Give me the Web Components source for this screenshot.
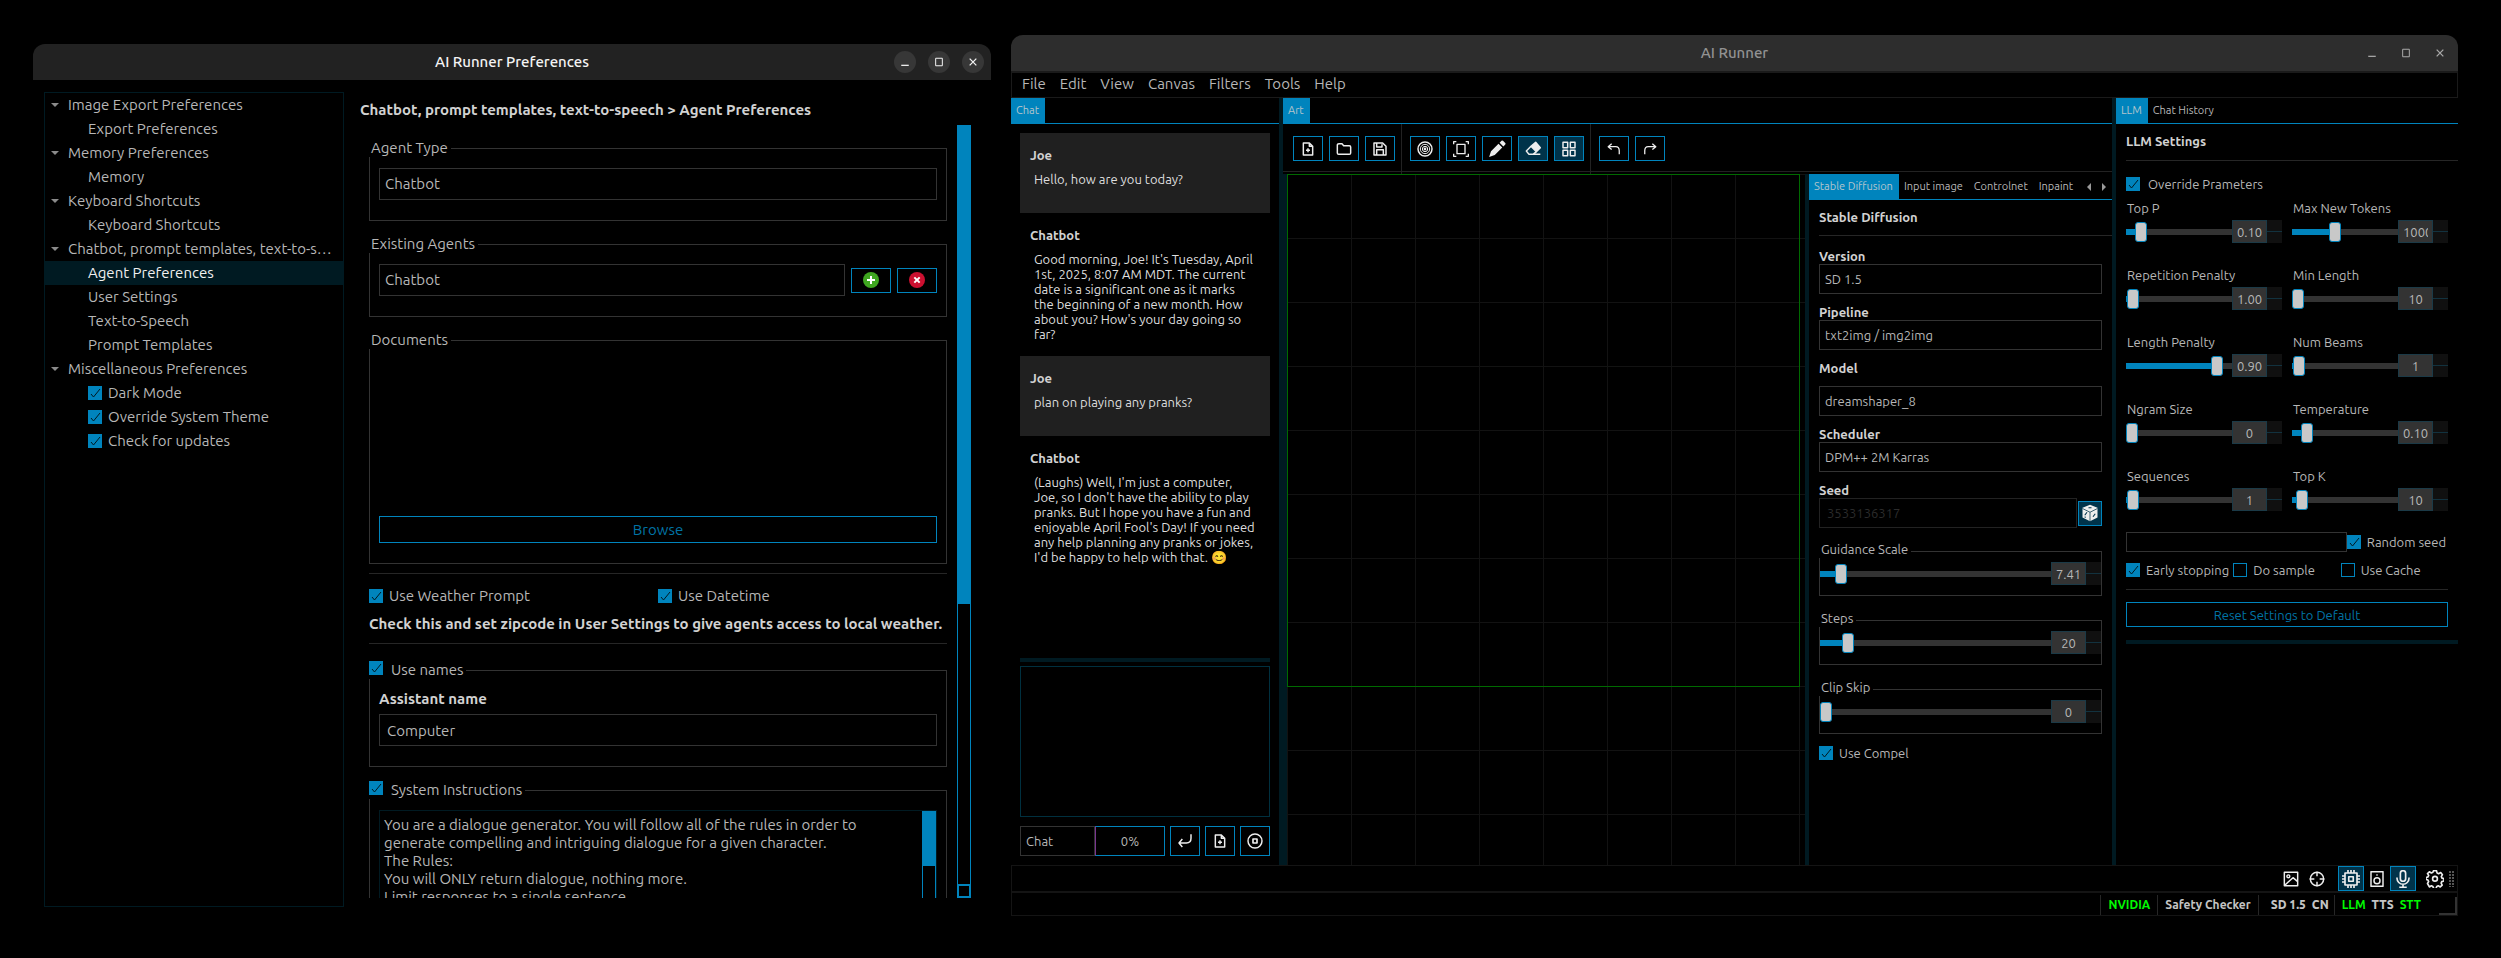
<!DOCTYPE html>
<html lang="en">
<head>
<meta charset="utf-8">
<title>AI Runner</title>
<style>
  :root {
    --blue: #0084bd;
    --deep: #001a22;
    --line: #333;
    --faint: #1c1c1c;
    --text: #b7b7b7;
    --bright: #d2d2d2;
  }
  html, body { margin: 0; height: 100%; background: #000; }
  body {
    color: var(--text);
    font-family: Ubuntu, "Noto Sans", "Open Sans", sans-serif;
    font-size: 15px;
    line-height: 18px;
  }
</style>
</head>
<body>
<app-desktop></app-desktop>
<script>
const BASE = `
  *, *::before, *::after { box-sizing: border-box; }
  button, input, select, textarea {
    appearance: none; margin: 0; padding: 0; border: 0; border-radius: 0; outline: 0;
    background: none; color: inherit; font: inherit;
  }
  a { color: inherit; text-decoration: none; }
  ul { list-style: none; margin: 0; padding: 0; }
  h1, h2, p { margin: 0; }
  hr { width: 100%; height: 1px; margin: 0; border: 0; background: #262626; flex: none; }
  svg { display: block; }
  input[type=checkbox] { width: 14px; height: 14px; border: 1px solid var(--blue); flex: none; }
  input[type=checkbox]:checked {
    background: var(--blue) url("data:image/svg+xml,%3Csvg xmlns='http://www.w3.org/2000/svg' viewBox='0 0 12 12'%3E%3Cpath d='M2 7l2.5 3L11 2' fill='none' stroke='%23001a22' stroke-width='1'/%3E%3C/svg%3E");
  }
`;

const ICONS = {
  newfile: '<path d="M5 3h9l5 5v13H5z M14 3v5h5 M12 11v6 M9 14h6"/>',
  folder: '<path d="M2 6.5Q2 4 4.5 4H9l2.500 3H20q2 0 2 2v9q0 2-2 2H4q-2 0-2-2z"/>',
  save: '<path d="M3 3h13l5 5v13H3z M7 21v-8h10v8 M7 3v6h8V5"/>',
  target: '<circle cx="12" cy="12" r="10.500"/><circle cx="12" cy="12" r="7" stroke-width="1.500"/><circle cx="12" cy="12" r="4" stroke-width="1.500"/><circle cx="12" cy="12" r="1"/>',
  bounds: '<path d="M6 5h12v14H6z M1 5V1h4 M19 1h4v4 M23 19v4h-4 M5 23H1v-4" stroke-width="2"/>',
  pencil: '<path d="M1.500 22.500L4 15 14 5l5 5L9 20z M15.500 3.500L18 1q1-1 2 0l3 3q1 1 0 2l-2.500 2.500z" fill="currentColor" stroke="none"/>',
  eraser: '<path d="M9 8l7-6 7 8-6 6z" fill="currentColor"/><path d="M9 8l-7 7 4 5h6l5-4M6 20h17" fill="none"/>',
  grid: '<path d="M3 2h7v8H3z M14 2h7v8h-7z M3 14h7v8H3z M14 14h7v8h-7z"/>',
  undo: '<path d="M8 3L2 8l6 5 M3 8h12q6 0 6 7v6"/>',
  redo: '<path d="M16 3l6 5-6 5 M21 8H9q-6 0-6 7v6"/>',
  enter: '<path d="M8 9l-5 6 5 6 M3 15h11q7 0 7-7V2"/>',
  stop: '<circle cx="12" cy="12" r="10.500"/><path d="M9 9h6v6H9z" stroke-width="2.500"/>',
  image: '<path d="M2 2h20v20H2z M3 21L15 10l7 6" /><circle cx="8" cy="8" r="2.200"/>',
  cross: '<circle cx="12" cy="12" r="10"/><path d="M12 1v7 M12 16v7 M1 12h7 M16 12h7"/>',
  chip: '<path d="M4 4h16v16H4z M9 9h6v6H9z M8 0v4 M12 0v4 M16 0v4 M8 20v4 M12 20v4 M16 20v4 M0 8h4 M0 12h4 M0 16h4 M20 8h4 M20 12h4 M20 16h4"/>',
  speaker: '<path d="M3 1h18v22H3z M11 6h2"/><circle cx="12" cy="14.500" r="4.500"/>',
  mic: '<rect x="8.500" y="1" width="7" height="14" rx="3.500"/><path d="M4 10v1a8 8 0 0 0 16 0v-1 M12 19v4 M7 23h10"/>',
  gear: '<path d="M10 1h4l.8 3 2 .9L19.600 3.400l2.300 2.800-1.500 2.600.9 2 2.700.8v3l-3 .9-.8 2 1.400 2.600-2.600 2.500-2.700-1.500-2 .8-.8 3h-3.500l-.8-3-2-.8-2.700 1.500L2 18l1.500-2.600-.9-2L0 12.500V10l2.700-.8.9-2L2 4.800 4.500 2.400l2.700 1.500 2-.9z" /><circle cx="12" cy="11.700" r="3.200"/>',
  dice: '<path d="M12 1l10 4v13l-10 5-10-5V5z" fill="currentColor" stroke="none"/><path d="M2 6l10 5 10-5 M12 11v12" stroke="#00334a" stroke-width="1"/><path d="M10 5h4 M5 15l3-4 M5 18l1-1 M16 17l3-4" stroke="#00334a" stroke-width="1.500"/>',
  add: '<circle cx="12" cy="12" r="12" fill="#3fa620" stroke="none"/><path d="M12 6v12 M6 12h12" stroke="#fff" stroke-width="3"/>',
  remove: '<circle cx="12" cy="12" r="12" fill="#cc1030" stroke="none"/><path d="M8 8l8 8 M16 8l-8 8" stroke="#fff" stroke-width="3"/>',
  min: '<path d="M3 20h18" stroke-width="3"/>',
  max: '<path d="M4 3h16v18H4z" stroke-width="2.400"/>',
  close: '<path d="M4 4l16 16 M20 4L4 20" stroke-width="3"/>'
};
const icon = (name, size = 16) =>
  `<svg width="${size}" height="${size}" viewBox="0 0 24 24" fill="none" stroke="currentColor" stroke-width="2.200" stroke-linejoin="round" aria-hidden="true">${ICONS[name]}</svg>`;

function define(name, render) {
  customElements.define(name, class extends HTMLElement {
    constructor() { super(); this.attachShadow({ mode: 'open' }); }
    connectedCallback() {
      if (this.shadowRoot.firstChild) return;
      const template = document.createElement('template');
      const attr = (key, fallback = '') => this.getAttribute(key) ?? fallback;
      const [css, html] = render(attr, this);
      template.innerHTML = `<style>${BASE}${css}</style>${html}`;
      this.shadowRoot.append(template.content.cloneNode(true));
    }
  });
}

/* Framed window: title bar, then the slotted content. */
define('ui-window', attr => [`
  :host { display: flex; flex-direction: column; min-width: 0; min-height: 0; --chip: none; }
  :host([active]) { --chip: #373737; }
  header {
    display: grid; grid-template-columns: 1fr auto 1fr; align-items: center; flex: none;
    height: 36px; padding: 0 7px; border-radius: 12px 12px 0 0; background: #2d2d2d; color: #929292;
  }
  :host([active]) header { background: #222; color: #f4f4f4; }
  h1 { grid-column: 2; font-size: 15px; font-weight: 500; line-height: 18px; }
  div { display: flex; justify-content: flex-end; gap: 12px; }
  button { display: grid; place-items: center; width: 22px; height: 22px; border-radius: 11px; background: var(--chip); color: #aaa; }
  :host([active]) button { color: #f4f4f4; }
`, `<header><h1>${attr('heading')}</h1><div>
  <button aria-label="Minimize">${icon('min', 10)}</button>
  <button aria-label="Maximize">${icon('max', 10)}</button>
  <button aria-label="Close">${icon('close', 10)}</button></div></header><slot></slot>`]);

define('check-box', attr => [`
  :host { display: block; }
  label { display: flex; align-items: center; gap: var(--gap, 6px); white-space: nowrap; }
`, `<label><input type="checkbox" ${attr('off', null) === null ? 'checked' : ''}><span>${attr('label')}</span></label>`]);

/* Titled frame; the title may carry a tick box. */
define('group-box', attr => {
  const ticked = attr('checkable', null) !== null;
  return [`
  :host { display: block; }
  fieldset { min-width: 0; margin: 0; padding: 11px 9px 20px; border: 1px solid var(--line); }
  legend { margin-left: -10px; padding: 0 3px 0 2px; background: #000; line-height: 18px; }
  legend.ticked { padding-left: 0; }
  label { display: flex; gap: 8px; }
  :host([compact]) fieldset { padding: 4px 0 10px; }
  :host([compact]) legend { margin-left: -1px; padding: 0 3px 4px 2px; line-height: 10px; }
`, `<fieldset><legend class="${ticked ? 'ticked' : ''}">${ticked
    ? `<label><input type="checkbox" checked>${attr('label')}</label>` : attr('label')}</legend><slot></slot></fieldset>`];
});

define('combo-box', attr => [`
  :host { display: block; min-width: 0; }
  label { display: block; color: var(--bright); font-weight: 700; line-height: 16px; }
  :host([spaced]) label { margin-bottom: 10px; }
  select { display: block; width: 100%; height: var(--field, 32px); padding: 0 5px; border: 1px solid var(--line); }
`, `${attr('label') ? `<label for="s">${attr('label')}</label>` : ''}
  <select id="s" aria-label="${attr('label', attr('name'))}"><option>${attr('value')}</option></select>`]);

define('icon-button', attr => [`
  :host { display: block; flex: none; width: 30px; height: 25px; }
  button { display: grid; place-items: center; width: 100%; height: 100%; border: 1px solid var(--blue); color: #eee; }
  :host([on]) button { background: #00334a; }
  :host([plain]) button { border-color: transparent; }
`, `<button aria-label="${attr('label')}">${icon(attr('icon'), attr('size', 16))}</button>`]);

define('tab-strip', attr => {
  const tabs = attr('tabs').split('|').map((t, i) => `<button role="tab" aria-selected="${i === 0}">${t}</button>`).join('');
  const more = attr('more', null) === null ? '' : `<nav><button aria-label="Previous tabs">
    <svg width="4" height="8"><path d="M4 0v8L0 4z" fill="#999"/></svg></button><button aria-label="Next tabs">
    <svg width="4" height="8"><path d="M0 0v8l4-4z" fill="#999"/></svg></button></nav>`;
  return [`
  :host { display: flex; flex: none; height: 26px; border-bottom: 1px solid var(--blue); font-size: 11px; line-height: 13px; }
  div { display: flex; }
  button { padding: 0 6px 1px 5px; white-space: nowrap; }
  button[aria-selected=true] { background: var(--blue); color: #b4c4cc; }
  nav { display: flex; gap: 11px; margin-left: auto; padding-right: 6px; }
  nav button { padding: 0; }
`, `<div role="tablist">${tabs}</div>${more}`];
});

/* Slider with its number field and stepper. */
define('slider-spin', attr => [`
  :host { display: block; min-width: 0; }
  label { display: block; height: 20px; padding: 0 1px; line-height: 16px; }
  div { display: flex; align-items: center; height: 23px; }
  input[type=range] { flex: 1; min-width: 0; width: 0; height: 20px; }
  input[type=range]::-webkit-slider-runnable-track {
    height: 6px;
    background: linear-gradient(90deg, var(--blue) ${attr('pos')}%, #333 ${attr('pos')}%);
  }
  input[type=range]::-webkit-slider-thumb {
    appearance: none; width: 12px; height: 20px; margin-top: -7px;
    border: 1px solid var(--blue); border-radius: 3px; background: #c8c8c8;
  }
  .num { width: 35px; height: 23px; padding: 0 4px; border: 1px solid #1b3a47; background: #333; text-align: center; }
  .step { flex: none; display: grid; grid-template-rows: 1fr 1fr; width: 15px; height: 23px; background: #101010; }
  .step button:first-child { border-bottom: 1px solid #12323f; }
`, `${attr('label') ? `<label for="r">${attr('label')}</label>` : ''}
  <div><input type="range" id="r" min="0" max="100" value="${attr('pos')}" aria-label="${attr('label', attr('name'))}">
  <input type="text" class="num" value="${attr('value')}" aria-label="Value">
  <span class="step"><button aria-label="Increase"></button><button aria-label="Decrease"></button></span></div>`]);

define('tree-panel', () => {
  const group = (title, kids) => `<li><button><svg width="8" height="4"><path d="M0 0h8L4 4z" fill="#8a8a8a"/></svg>${title}</button><ul>${kids}</ul></li>`;
  const page = (title, on) => `<li><a href="#" ${on ? 'aria-current="page"' : ''}>${title}</a></li>`;
  const tick = title => `<li><check-box label="${title}"></check-box></li>`;
  return [`
  :host { display: block; flex: none; width: 300px; border: 1px solid var(--deep); line-height: 24px; white-space: nowrap; }
  button, a { display: flex; align-items: center; width: 100%; height: 24px; }
  button { gap: 9px; padding-left: 6px; }
  a { padding-left: 43px; }
  a[aria-current] { background: var(--deep); color: #f0f0f0; }
  check-box { padding-left: 43px; }
`, `<ul>${[
    group('Image Export Preferences', page('Export Preferences')),
    group('Memory Preferences', page('Memory')),
    group('Keyboard Shortcuts', page('Keyboard Shortcuts')),
    group('Chatbot, prompt templates, text-to-s…', page('Agent Preferences', true) + page('User Settings') + page('Text-to-Speech') + page('Prompt Templates')),
    group('Miscellaneous Preferences', tick('Dark Mode') + tick('Override System Theme') + tick('Check for updates'))
  ].join('')}</ul>`];
});

define('preferences-page', () => [`
  :host { display: flex; flex-direction: column; flex: 1; min-width: 0; padding: 9px 9px 9px 16px; }
  h2 { color: var(--bright); font-size: 15px; font-weight: 700; line-height: 18px; flex: none; }
  .view { display: flex; flex: 1; min-height: 0; margin-top: 6px; gap: 10px; }
  .page { flex: 1; min-width: 0; padding: 14px 0 0 9px; overflow: hidden; }
  group-box + group-box { margin-top: 14px; }
  .row { display: flex; align-items: center; gap: 6px; }
  .row combo-box { flex: 1; }
  .row icon-button { width: 40px; }
  .files { min-height: 150px; margin-bottom: 6px; }
  .browse { display: block; width: 100%; height: 27px; border: 1px solid var(--blue); color: #0074a6; }
  hr { margin: 9px 0 13px; }
  .pair { display: grid; grid-template-columns: 1fr 1fr; }
  .note { margin: 10px 0; color: var(--bright); font-weight: 700; white-space: nowrap; }
  hr.low { margin: 0 0 17px; }
  .name { display: block; color: var(--bright); font-weight: 700; }
  .text { display: block; width: 100%; height: 32px; margin-top: 6px; padding: 0 7px; border: 1px solid var(--line); }
  .prompt { display: flex; height: 164px; border: 1px solid var(--deep); }
  textarea { flex: 1; min-width: 0; padding: 5px 4px; line-height: 18px; resize: none; overflow: hidden; white-space: pre; }
  .bar { flex: none; width: 14px; border: 1px solid var(--blue); }
  .bar i { display: block; height: 34%; background: var(--blue); }
  .scroll { display: flex; flex-direction: column; flex: none; width: 14px; border: 1px solid var(--blue); }
  .scroll i { height: 62%; background: var(--blue); }
  .scroll b { height: 14px; margin: auto -1px -1px; border: 2px solid var(--blue); }
`, `<h2>Chatbot, prompt templates, text-to-speech &gt; Agent Preferences</h2>
<div class="view"><div class="page">
  <group-box label="Agent Type"><combo-box name="Agent Type" value="Chatbot"></combo-box></group-box>
  <group-box label="Existing Agents"><div class="row"><combo-box name="Existing Agents" value="Chatbot"></combo-box>
    <icon-button icon="add" label="Add agent"></icon-button><icon-button icon="remove" label="Delete agent"></icon-button></div></group-box>
  <group-box label="Documents"><div class="files"></div><button class="browse">Browse</button></group-box>
  <hr>
  <div class="pair"><check-box label="Use Weather Prompt"></check-box><check-box label="Use Datetime"></check-box></div>
  <p class="note">Check this and set zipcode in User Settings to give agents access to local weather.</p>
  <hr class="low">
  <group-box label="Use names" checkable><label class="name" for="n">Assistant name</label><input class="text" id="n" type="text" value="Computer"></group-box>
  <group-box label="System Instructions" checkable><div class="prompt"><textarea aria-label="System Instructions">You are a dialogue generator. You will follow all of the rules in order to
generate compelling and intriguing dialogue for a given character.
The Rules:
You will ONLY return dialogue, nothing more.
Limit responses to a single sentence.</textarea><span class="bar"><i></i></span></div></group-box>
</div><span class="scroll"><i></i><b></b></span></div>`]);

define('chat-message', attr => [`
  :host { display: block; min-height: 80px; padding: 14px 15px 14px 10px; font-size: 13px; line-height: 15px; }
  :host([user]) { background: #202020; }
  h2 { color: var(--bright); font-size: 13px; font-weight: 700; line-height: 17px; }
  p { margin: 8px 0 0 4px; color: #dedede; white-space: pre-line; }
`, `<h2>${attr('from')}</h2><p><slot></slot></p>`]);

define('chat-pane', () => [`
  :host { display: flex; flex-direction: column; flex: none; width: 268px; font-size: 13px; line-height: 15px; }
  .body { display: flex; flex-direction: column; flex: 1; min-height: 0; padding: 9px; }
  .log { flex: 1; min-height: 0; overflow: hidden; }
  .split { height: 4px; background: var(--deep); flex: none; }
  textarea { flex: none; height: 151px; margin: 4px 0 9px; border: 1px solid #00303f; resize: none; }
  .row { display: flex; gap: 5px; }
  combo-box { --field: 30px; width: 75px; }
  .meter { flex: 1; display: grid; place-items: center; height: 30px; margin-left: -5px; border: 1px solid var(--blue); border-left-color: #7a3590; }
  icon-button { height: 30px; }
`, `<tab-strip tabs="Chat"></tab-strip>
<div class="body"><div class="log">
  <chat-message user from="Joe">Hello, how are you today?</chat-message>
  <chat-message from="Chatbot">Good morning, Joe! It's Tuesday, April
1st, 2025, 8:07 AM MDT. The current
date is a significant one as it marks
the beginning of a new month. How
about you? How's your day going so
far?</chat-message>
  <chat-message user from="Joe">plan on playing any pranks?</chat-message>
  <chat-message from="Chatbot">(Laughs) Well, I'm just a computer,
Joe, so I don't have the ability to play
pranks. But I hope you have a fun and
enjoyable April Fool's Day! If you need
any help planning any pranks or jokes,
I'd be happy to help with that. 😊</chat-message>
</div>
<div class="split"></div>
<textarea aria-label="Message"></textarea>
<div class="row"><combo-box name="Mode" value="Chat"></combo-box><span class="meter" role="progressbar" aria-valuenow="0">0%</span>
  <icon-button icon="enter" label="Send"></icon-button><icon-button icon="newfile" label="New conversation"></icon-button><icon-button icon="stop" label="Stop"></icon-button></div>
</div>`]);

define('diffusion-pane', () => [`
  :host { display: flex; flex-direction: column; flex: none; width: 303px; font-size: 13px; line-height: 16px; }
  .body { padding: 9px 10px 0; --field: 30px; }
  h2 { color: var(--bright); font-size: 13px; font-weight: 700; line-height: 16px; }
  hr { width: auto; margin: 10px -10px 12px 0; }
  combo-box { margin-bottom: 10px; }
  label { display: block; color: var(--bright); font-weight: 700; }
  .seed { display: flex; align-items: center; gap: 1px; margin-bottom: 16px; }
  .seed input { flex: 1; min-width: 0; height: 30px; padding: 0 7px; border: 1px solid #222; color: #2c2c2c; }
  .seed icon-button { width: 24px; }
  group-box { margin-bottom: 17px; }
  check-box { margin-top: -6px; }
`, `<tab-strip tabs="Stable Diffusion|Input image|Controlnet|Inpaint" more></tab-strip>
<div class="body"><h2>Stable Diffusion</h2><hr>
  <combo-box label="Version" value="SD 1.5"></combo-box>
  <combo-box label="Pipeline" value="txt2img / img2img"></combo-box>
  <combo-box label="Model" value="dreamshaper_8" spaced></combo-box>
  <combo-box label="Scheduler" value="DPM++ 2M Karras"></combo-box>
  <label for="seed">Seed</label>
  <div class="seed"><input type="text" id="seed" value="3533136317"><icon-button on icon="dice" size="18" label="Random seed"></icon-button></div>
  <group-box compact label="Guidance Scale"><slider-spin name="Guidance Scale" pos="7" value="7.41"></slider-spin></group-box>
  <group-box compact label="Steps"><slider-spin name="Steps" pos="10" value="20"></slider-spin></group-box>
  <group-box compact label="Clip Skip"><slider-spin name="Clip Skip" pos="0" value="0"></slider-spin></group-box>
  <check-box label="Use Compel"></check-box>
</div>`]);

define('art-pane', () => [`
  :host { display: flex; flex-direction: column; flex: 1; min-width: 0; }
  .tools { display: flex; flex: none; height: 50px; background: linear-gradient(#222, #222) 0 47px / 100% 1px no-repeat; }
  .set { display: flex; gap: 6px; padding: 12px 6px 13px 8px; border-right: 1px solid #222; }
  .set:first-child { padding-left: 10px; }
  .set:last-child { border: 0; }
  .work { display: flex; flex: 1; min-height: 0; }
  .edge { flex: none; width: 4px; background: var(--deep); }
  .canvas {
    flex: 1; min-width: 0; overflow: hidden;
    background: linear-gradient(#121212 1px, transparent 1px), linear-gradient(90deg, #121212 1px, transparent 1px);
    background-size: 64px 64px;
  }
  .frame { width: 513px; height: 513px; border: 1px solid #006a00; }
`, `<tab-strip tabs="Art"></tab-strip>
<div class="tools">
  <div class="set"><icon-button icon="newfile" label="New"></icon-button><icon-button icon="folder" label="Open"></icon-button><icon-button icon="save" label="Save"></icon-button></div>
  <div class="set"><icon-button icon="target" label="Recenter"></icon-button><icon-button icon="bounds" label="Active area"></icon-button><icon-button icon="pencil" size="18" label="Brush"></icon-button><icon-button on icon="eraser" label="Eraser"></icon-button><icon-button on icon="grid" label="Grid"></icon-button></div>
  <div class="set"><icon-button icon="undo" size="14" label="Undo"></icon-button><icon-button icon="redo" size="14" label="Redo"></icon-button></div>
</div>
<div class="work"><span class="edge"></span><div class="canvas"><div class="frame"></div></div><span class="edge"></span><diffusion-pane></diffusion-pane></div>`]);

define('llm-pane', () => {
  const rows = [['Top P', 10, '0.10'], ['Max New Tokens', 39, '1000'], ['Repetition Penalty', 1, '1.00'], ['Min Length', 0, '10'],
    ['Length Penalty', 90, '0.90'], ['Num Beams', 1, '1'], ['Ngram Size', 0, '0'], ['Temperature', 10, '0.10'], ['Sequences', 1, '1'], ['Top K', 4, '10']];
  return [`
  :host { display: flex; flex-direction: column; flex: none; width: 342px; font-size: 13px; line-height: 16px; }
  .body { padding: 9px 10px 0; }
  h2 { color: var(--bright); font-size: 13px; font-weight: 700; line-height: 16px; }
  .wide { width: auto; margin: 11px -10px 15px 0; }
  .grid { display: grid; grid-template-columns: 1fr 1fr; gap: 24px 10px; margin: 8px 0 21px; }
  .seed { display: flex; align-items: center; margin-bottom: 10px; padding-right: 2px; }
  .seed input { flex: 1; min-width: 0; height: 20px; border: 1px solid var(--line); }
  .flags { display: grid; grid-template-columns: 1fr 1fr 1fr; }
  .rule { margin: 11px 0 12px; }
  button { display: block; width: 100%; height: 25px; border: 1px solid var(--blue); color: #0074a6; }
  .split { height: 4px; margin: 13px -10px 0 0; background: var(--deep); }
`, `<tab-strip tabs="LLM|Chat History"></tab-strip>
<div class="body"><h2>LLM Settings</h2><hr class="wide">
  <check-box label="Override Prameters" style="--gap:8px"></check-box>
  <div class="grid">${rows.map(([l, p, v]) => `<slider-spin label="${l}" pos="${p}" value="${v}"></slider-spin>`).join('')}</div>
  <div class="seed"><input type="text" aria-label="Seed"><check-box label="Random seed"></check-box></div>
  <div class="flags"><check-box label="Early stopping"></check-box><check-box off label="Do sample"></check-box><check-box off label="Use Cache"></check-box></div>
  <hr class="rule"><button>Reset Settings to Default</button><div class="split"></div>
</div>`];
});

define('status-area', () => [`
  :host { display: block; flex: none; border: 1px solid #141414; }
  .tools { display: flex; align-items: center; justify-content: flex-end; height: 25px; padding-right: 3px; }
  icon-button { width: 26px; }
  icon-button[icon=chip] { margin-left: 8px; }
  icon-button[icon=gear] { margin-left: 6px; }
  .dots { width: 5px; height: 17px; margin-left: 1px; background: repeating-linear-gradient(#000 0 1px, transparent 1px 3px), linear-gradient(90deg, #555 2px, #000 2px 3px, #555 3px); }
  .status { display: flex; justify-content: flex-end; height: 24px; border-top: 2px solid #141414; color: #c4c4c4; font-size: 12px; font-weight: 700; line-height: 22px; white-space: nowrap; }
  .status span { display: flex; gap: 6px; margin-top: 2px; padding: 0 7px; border-left: 1px solid #262626; line-height: 19px; }
  .status .mid { padding: 0 5px 0 12px; }
  .status .last { padding-right: 18px; }
  em { color: #00fa00; font-style: normal; }
  i { width: 18px; height: 18px; margin-top: 4px; border: solid #333; border-width: 0 2px 2px 0; }
`, `<div class="tools">
  <icon-button plain icon="image" label="Safety filter"></icon-button><icon-button plain icon="cross" label="Center"></icon-button>
  <icon-button on icon="chip" size="18" label="LLM"></icon-button><icon-button plain icon="speaker" label="Text-to-speech"></icon-button><icon-button on icon="mic" size="18" label="Speech-to-text"></icon-button>
  <icon-button plain icon="gear" size="18" label="Settings"></icon-button><span class="dots"></span></div>
<div class="status"><span><em>NVIDIA</em></span><span>Safety Checker</span><span class="mid"><b>SD 1.5</b><b>CN</b></span><span class="last"><em>LLM</em><b>TTS</b><em>STT</em></span><i></i></div>`]);

define('app-desktop', () => [`
  :host { display: grid; grid-template-columns: 958fr 1447fr; gap: 20px; height: 100vh; min-height: 900px; padding: 35px 43px 42px 33px; box-sizing: border-box; }
  .prefs { margin-top: 9px; }
  .cols { display: flex; flex: 1; min-height: 0; padding: 12px 11px 9px; }
  .menu { display: flex; flex: none; gap: 14px; height: 27px; padding: 0 10px; border: solid #1a1a1a; border-width: 2px 1px 1px; }
  .menu a { line-height: 22px; }
  .main { display: flex; flex: 1; min-height: 0; }
  .edge { flex: none; width: 4px; background: var(--deep); }
`, `<ui-window class="prefs" active heading="AI Runner Preferences"><div class="cols"><tree-panel></tree-panel><preferences-page></preferences-page></div></ui-window>
<ui-window heading="AI Runner">
  <nav class="menu">${['File', 'Edit', 'View', 'Canvas', 'Filters', 'Tools', 'Help'].map(m => `<a href="#">${m}</a>`).join('')}</nav>
  <div class="main"><chat-pane></chat-pane><span class="edge"></span><art-pane></art-pane><span class="edge"></span><llm-pane></llm-pane></div>
  <status-area></status-area>
</ui-window>`]);
</script>
</body>
</html>
